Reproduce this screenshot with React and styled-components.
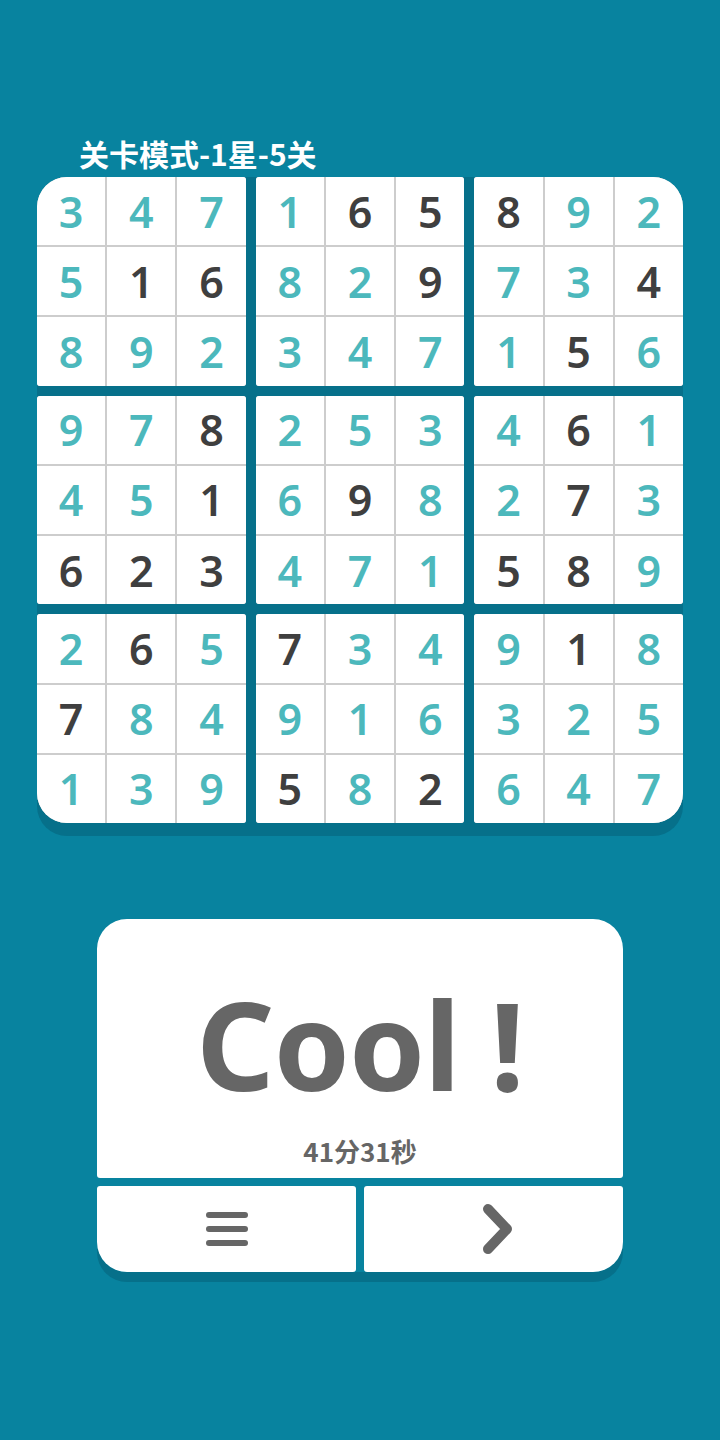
import React from "react";
import styled, { createGlobalStyle } from "styled-components";

const colors = {
  bg: "#08839f",
  shade: "#06708a",
  line: "#cdcdcd",
  teal: "#4cb8bc",
  ink: "#3f3f3f",
  grey: "#666666",
};

// t = digit entered by the player (teal), d = given digit (dark)
const rows = [
  "3t4t7t1t6d5d8d9t2t",
  "5t1d6d8t2t9d7t3t4d",
  "8t9t2t3t4t7t1t5d6t",
  "9t7t8d2t5t3t4t6d1t",
  "4t5t1d6t9d8t2t7d3t",
  "6d2d3d4t7t1t5d8d9t",
  "2t6d5t7d3t4t9t1d8t",
  "7d8t4t9t1t6t3t2t5t",
  "1t3t9t5d8t2d6t4t7t",
].map((r) => r.match(/../g).map((c) => ({ n: c[0], given: c[1] === "d" })));

const blockCells = (b) => {
  const br = Math.floor(b / 3) * 3;
  const bc = (b % 3) * 3;
  const out = [];
  for (let r = 0; r < 3; r++)
    for (let c = 0; c < 3; c++) out.push(rows[br + r][bc + c]);
  return out;
};

const cornerFor = (b) =>
  ({ 0: "tl", 2: "tr", 6: "bl", 8: "br" }[b] || "none");

const App = () => {
  return (
    <>
      <GlobalStyle />
      <Page>
        <Title>关卡模式-1星-5关</Title>
        <Board>
          {Array.from({ length: 9 }, (_, b) => (
            <Block key={b} $corner={cornerFor(b)}>
              {blockCells(b).map((cell, i) => (
                <Cell key={i} $given={cell.given}>
                  {cell.n}
                </Cell>
              ))}
            </Block>
          ))}
        </Board>

        <Result>
          <ResultCard>
            <CoolText>Cool !</CoolText>
            <TimeText>41分31秒</TimeText>
          </ResultCard>
          <Actions>
            <ActionButton $side="left" aria-label="menu">
              <svg width="44" height="40" viewBox="0 0 44 40">
                <g stroke={colors.grey} strokeWidth="6" strokeLinecap="round">
                  <line x1="4" y1="6" x2="40" y2="6" />
                  <line x1="4" y1="20" x2="40" y2="20" />
                  <line x1="4" y1="34" x2="40" y2="34" />
                </g>
              </svg>
            </ActionButton>
            <ActionButton $side="right" aria-label="next">
              <NextIcon width="40" height="52" viewBox="0 0 40 52">
                <polyline
                  points="8,6 27,26 8,46"
                  fill="none"
                  stroke={colors.grey}
                  strokeWidth="10"
                  strokeLinecap="round"
                  strokeLinejoin="round"
                />
              </NextIcon>
            </ActionButton>
          </Actions>
        </Result>
      </Page>
    </>
  );
};

const GlobalStyle = createGlobalStyle`
  html, body {
    margin: 0;
    padding: 0;
    background: ${colors.bg};
  }
  body {
    font-family: "Noto Sans", "Noto Sans CJK SC", sans-serif;
  }
`;

const Page = styled.div`
  width: 720px;
  height: 1440px;
  box-sizing: border-box;
  padding: 133px 37px 0;
  display: flex;
  flex-direction: column;
`;

const Title = styled.div`
  margin-left: 42px;
  font-family: "Noto Sans CJK SC", "Noto Sans", sans-serif;
  font-weight: 700;
  font-size: 30px;
  line-height: 40px;
  color: #ffffff;
`;

const Board = styled.div`
  margin-top: 4px;
  height: 646px;
  display: grid;
  grid-template-columns: repeat(3, 1fr);
  grid-template-rows: repeat(3, 1fr);
  gap: 10px;
  background: ${colors.shade};
  border-radius: 30px;
  box-shadow: 0 13px 0 ${colors.shade};
`;

const radius = {
  tl: "30px 3px 3px 3px",
  tr: "3px 30px 3px 3px",
  bl: "3px 3px 3px 30px",
  br: "3px 3px 30px 3px",
  none: "3px",
};

const Block = styled.div`
  display: grid;
  grid-template-columns: repeat(3, 1fr);
  grid-template-rows: repeat(3, 1fr);
  gap: 2px;
  background: ${colors.line};
  border-radius: ${({ $corner }) => radius[$corner]};
  overflow: hidden;
`;

const Cell = styled.div`
  background: #ffffff;
  display: flex;
  align-items: center;
  justify-content: center;
  font-family: "Noto Sans", sans-serif;
  font-weight: 600;
  font-size: 43px;
  line-height: 1;
  color: ${({ $given }) => ($given ? colors.ink : colors.teal)};
`;

const Result = styled.div`
  margin: 96px auto 0;
  width: 526px;
  display: flex;
  flex-direction: column;
  gap: 8px;
`;

const ResultCard = styled.div`
  height: 259px;
  background: #ffffff;
  border-radius: 30px 30px 3px 3px;
  display: flex;
  flex-direction: column;
  align-items: center;
`;

const CoolText = styled.div`
  margin-top: 50px;
  font-family: "Noto Sans", sans-serif;
  font-weight: 700;
  font-size: 122px;
  line-height: 150px;
  letter-spacing: -1px;
  color: ${colors.grey};
`;

const TimeText = styled.div`
  margin-top: 15px;
  font-family: "Noto Sans CJK SC", "Noto Sans", sans-serif;
  font-weight: 700;
  font-size: 26px;
  line-height: 34px;
  color: ${colors.grey};
`;

const Actions = styled.div`
  display: grid;
  grid-template-columns: 1fr 1fr;
  gap: 8px;
  border-radius: 0 0 30px 30px;
  box-shadow: 0 10px 0 ${colors.shade};
`;

const ActionButton = styled.div`
  height: 86px;
  background: #ffffff;
  display: flex;
  align-items: center;
  justify-content: center;
  border-radius: ${({ $side }) =>
    $side === "left" ? "3px 3px 3px 30px" : "3px 3px 30px 3px"};
`;

const NextIcon = styled.svg`
  margin-left: 12px;
`;

export default App;
